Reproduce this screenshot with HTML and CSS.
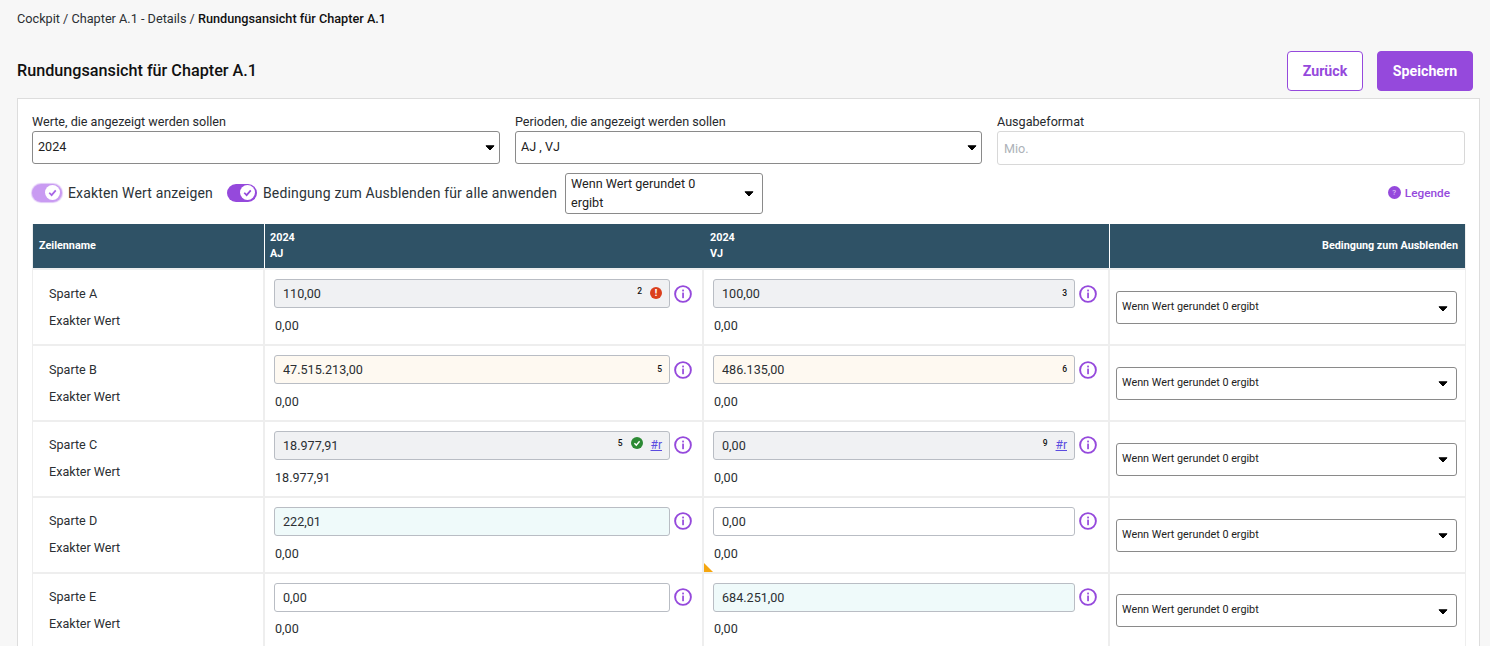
FILE: index.html
```html
<!DOCTYPE html>
<html lang="de">
<head>
  <meta charset="UTF-8" />
  <meta name="viewport" content="width=device-width, initial-scale=1.0"/>
  <title>Rundungsansicht für Chapter A.1</title>
  <link rel="stylesheet" href="styles.css">
</head>
<body>

  <svg class="defs" width="0" height="0">
    <symbol id="info" viewBox="0 0 18 18">
      <circle cx="9" cy="9" r="7.9" fill="none" stroke="currentColor" stroke-width="1.9"/>
      <rect x="8.2" y="7.6" width="1.7" height="5.6" fill="currentColor"/>
      <rect x="8.2" y="4.6" width="1.7" height="1.8" fill="currentColor"/>
    </symbol>
    <symbol id="caret" viewBox="0 0 10 6">
      <path d="M1 .8h8L5 5z" fill="#000" stroke="#000" stroke-width="1" stroke-linejoin="round"/>
    </symbol>
    <symbol id="check" viewBox="0 0 12 12">
      <path d="M3.4 6.2l1.9 1.9 3.3-3.8" fill="none" stroke="currentColor" stroke-width="1.4"/>
    </symbol>
  </svg>

  <div class="crumbs">Cockpit / Chapter A.1 - Details / <b>Rundungsansicht für Chapter A.1</b></div>

  <div class="page-head">
    <h1>Rundungsansicht für Chapter A.1</h1>
    <div class="actions">
      <button class="btn btn-outline">Zurück</button>
      <button class="btn btn-solid">Speichern</button>
    </div>
  </div>

  <div class="card">
    <div class="filters">
      <div class="filter">
        <label>Werte, die angezeigt werden sollen</label>
        <div class="select">2024<svg class="caret"><use href="#caret"/></svg></div>
      </div>
      <div class="filter">
        <label>Perioden, die angezeigt werden sollen</label>
        <div class="select">AJ , VJ<svg class="caret"><use href="#caret"/></svg></div>
      </div>
      <div class="filter">
        <label>Ausgabeformat</label>
        <div class="select select-off">Mio.</div>
      </div>
    </div>

    <div class="options">
      <span class="toggle toggle-light"><i><svg><use href="#check"/></svg></i></span>
      <span class="toggle-label">Exakten Wert anzeigen</span>
      <span class="toggle toggle-second"><i><svg><use href="#check"/></svg></i></span>
      <span class="toggle-label">Bedingung zum Ausblenden für alle anwenden</span>
      <div class="select select-wrap"><span>Wenn Wert gerundet 0 ergibt</span><svg class="caret"><use href="#caret"/></svg></div>
      <a class="legend"><span class="legend-icon">?</span>Legende</a>
    </div>

    <div class="table">
      <div class="row head">
        <div class="cell">Zeilenname</div>
        <div class="cell head-aj">2024<br>AJ</div>
        <div class="cell head-vj">2024<br>VJ</div>
        <div class="cell head-cond">Bedingung zum Ausblenden</div>
      </div>

      <div class="row">
        <div class="cell name"><span>Sparte A</span><span>Exakter Wert</span></div>
        <div class="cell value">
          <div class="line">
            <div class="amount grey">110,00<sup class="up">2</sup><span class="status err">!</span></div>
            <svg class="info"><use href="#info"/></svg>
          </div>
          <div class="exact">0,00</div>
        </div>
        <div class="cell value vj">
          <div class="line">
            <div class="amount grey">100,00<sup>3</sup></div>
            <svg class="info"><use href="#info"/></svg>
          </div>
          <div class="exact">0,00</div>
        </div>
        <div class="cell cond"><div class="select select-small">Wenn Wert gerundet 0 ergibt<svg class="caret"><use href="#caret"/></svg></div></div>
      </div>

      <div class="row">
        <div class="cell name"><span>Sparte B</span><span>Exakter Wert</span></div>
        <div class="cell value">
          <div class="line">
            <div class="amount cream">47.515.213,00<sup>5</sup></div>
            <svg class="info"><use href="#info"/></svg>
          </div>
          <div class="exact">0,00</div>
        </div>
        <div class="cell value vj">
          <div class="line">
            <div class="amount cream">486.135,00<sup>6</sup></div>
            <svg class="info"><use href="#info"/></svg>
          </div>
          <div class="exact">0,00</div>
        </div>
        <div class="cell cond"><div class="select select-small">Wenn Wert gerundet 0 ergibt<svg class="caret"><use href="#caret"/></svg></div></div>
      </div>

      <div class="row">
        <div class="cell name"><span>Sparte C</span><span>Exakter Wert</span></div>
        <div class="cell value">
          <div class="line">
            <div class="amount grey">18.977,91<sup class="up">5</sup><span class="status ok"><svg><use href="#check"/></svg></span><a class="ref">#r</a></div>
            <svg class="info"><use href="#info"/></svg>
          </div>
          <div class="exact">18.977,91</div>
        </div>
        <div class="cell value vj">
          <div class="line">
            <div class="amount grey">0,00<sup class="up">9</sup><a class="ref">#r</a></div>
            <svg class="info"><use href="#info"/></svg>
          </div>
          <div class="exact">0,00</div>
        </div>
        <div class="cell cond"><div class="select select-small">Wenn Wert gerundet 0 ergibt<svg class="caret"><use href="#caret"/></svg></div></div>
      </div>

      <div class="row">
        <div class="cell name"><span>Sparte D</span><span>Exakter Wert</span></div>
        <div class="cell value">
          <div class="line">
            <div class="amount mint">222,01</div>
            <svg class="info"><use href="#info"/></svg>
          </div>
          <div class="exact">0,00</div>
        </div>
        <div class="cell value vj">
          <div class="line">
            <div class="amount">0,00</div>
            <svg class="info"><use href="#info"/></svg>
          </div>
          <div class="exact">0,00</div>
          <span class="flag"></span>
        </div>
        <div class="cell cond"><div class="select select-small">Wenn Wert gerundet 0 ergibt<svg class="caret"><use href="#caret"/></svg></div></div>
      </div>

      <div class="row">
        <div class="cell name"><span>Sparte E</span><span>Exakter Wert</span></div>
        <div class="cell value">
          <div class="line">
            <div class="amount">0,00</div>
            <svg class="info"><use href="#info"/></svg>
          </div>
          <div class="exact">0,00</div>
        </div>
        <div class="cell value vj">
          <div class="line">
            <div class="amount mint">684.251,00</div>
            <svg class="info"><use href="#info"/></svg>
          </div>
          <div class="exact">0,00</div>
        </div>
        <div class="cell cond"><div class="select select-small">Wenn Wert gerundet 0 ergibt<svg class="caret"><use href="#caret"/></svg></div></div>
      </div>
    </div>
  </div>

</body>
</html>
```

FILE: styles.css
```css
html, body {
  height: 100%;
  overflow: hidden;
}

body {
  margin: 0;
  padding: 0 10px 0 17px;
  box-sizing: border-box;
  font-family: Roboto, "Liberation Sans", sans-serif;
  font-size: 12.6px;
  color: #212529;
  background: #f7f7f7;
}

.defs {
  position: absolute;
}

.crumbs {
  padding-top: 11px;
  height: 15px;
  line-height: 15px;
  font-size: 12.7px;
  color: #2b2f33;
}

.crumbs b {
  font-weight: 500;
  color: #111;
}

.page-head {
  display: flex;
  justify-content: space-between;
  align-items: center;
  margin-top: 25px;
  padding-right: 7px;
  height: 40px;
}

h1 {
  margin: 0 0 2px;
  font-size: 16.2px;
  font-weight: 500;
  color: #111;
}

.actions {
  display: flex;
  gap: 14px;
}

.btn {
  height: 40px;
  border-radius: 4px;
  font-family: inherit;
  font-size: 14.2px;
  font-weight: 700;
  border: 1px solid #9549dc;
}

.btn-outline {
  width: 76px;
  background: #fff;
  color: #9549dc;
}

.btn-solid {
  width: 96px;
  background: #9549dc;
  color: #fff;
}

.card {
  margin-top: 7px;
  height: 560px;
  padding: 14px 14px 0;
  background: #fff;
  border: 1px solid #ddd;
}

.filters {
  display: grid;
  grid-template-columns: 468px 467px 468px;
  gap: 15px;
}

.filter label {
  display: block;
  height: 18px;
  line-height: 18px;
  color: #26292d;
}

.select {
  position: relative;
  display: flex;
  align-items: center;
  height: 33px;
  padding: 0 22px 2px 5px;
  box-sizing: border-box;
  background: #fff;
  border: 1px solid #8a8a8a;
  border-radius: 3px;
  color: #222;
}

.select-off {
  height: 34px;
  padding: 0 22px 0 6px;
  border-color: #d8d8d8;
  color: #adb2b8;
}

.caret {
  position: absolute;
  right: 4px;
  top: 50%;
  width: 10px;
  height: 6px;
  margin-top: -3px;
}

.options {
  display: flex;
  align-items: center;
  height: 41px;
  margin-top: 8px;
}

.toggle {
  display: flex;
  justify-content: flex-end;
  align-items: center;
  width: 30px;
  height: 18px;
  margin-bottom: 2px;
  padding: 2px;
  box-sizing: border-box;
  border-radius: 9px;
  background: #9549dc;
  color: #9549dc;
}

.toggle i {
  display: block;
  width: 15px;
  height: 15px;
  border-radius: 50%;
  background: #fff;
}

.toggle svg {
  display: block;
  width: 15px;
  height: 15px;
}

.toggle-light {
  background: #c99bf2;
  color: #a865e6;
  box-shadow: 0 0 1px 1px #e0c8f7;
}

.toggle-second {
  margin-left: 14px;
}

.toggle-label {
  margin: 0 0 2px 6px;
  font-size: 14px;
  letter-spacing: .16px;
  color: #2c3338;
}

.select-wrap {
  width: 198px;
  height: 41px;
  margin-left: 8px;
  padding-right: 50px;
  line-height: 19px;
}

.select-wrap .caret {
  right: 8px;
}

.legend {
  display: flex;
  align-items: center;
  margin: 0 15px 2px auto;
  font-size: 11.8px;
  font-weight: 500;
  color: #9549dc;
}

.legend-icon {
  width: 13px;
  height: 13px;
  margin-right: 4px;
  border-radius: 50%;
  background: #9549dc;
  color: #d9bdf5;
  font-size: 8px;
  line-height: 13px;
  text-align: center;
}

.table {
  margin: 10px 0 0 1px;
  width: 1432px;
  background: #eee;
  box-shadow: -1px 0 #eee, 1px 0 #eee;
}

.row {
  display: grid;
  grid-template-columns: 230px 439px 406px 357px;
  height: 73.8px;
  margin-bottom: 2px;
}

.cell {
  border-left: 2px solid #eee;
  box-sizing: border-box;
  background: #fff;
}

.cell:first-child {
  border-left: 0;
}

.head {
  grid-template-columns: 231px 439px 406px 356px;
  height: 44px;
  margin-bottom: 2.4px;
  color: #fff;
  font-size: 10.8px;
  font-weight: 700;
}

.head .cell {
  display: flex;
  align-items: center;
  border-left: 0;
  padding-left: 6px;
  line-height: 16px;
  background: #2f5266;
}

.head .head-aj {
  padding-left: 5px;
  border-left: 1px solid #fff;
}

.head .head-vj {
  padding-left: 7px;
}

.head .head-cond {
  justify-content: flex-end;
  padding-right: 7px;
  border-left: 1px solid #fff;
}

.name {
  display: flex;
  flex-direction: column;
  gap: 12px;
  padding: 15.4px 0 0 16px;
  line-height: 15px;
  color: #2b2f33;
}

.value {
  position: relative;
  padding: 9px 0 0 9px;
}

.line {
  display: flex;
  align-items: center;
}

.amount {
  display: flex;
  align-items: center;
  width: 396px;
  height: 29px;
  padding: 0 7px 0 8px;
  box-sizing: border-box;
  background: #fff;
  border: 1px solid #b9bdc4;
  border-radius: 3px;
  color: #2b2f33;
}

.vj .amount {
  width: 362px;
}

.amount sup {
  align-self: flex-start;
  margin: 9px 0 0 auto;
  font-size: 8.5px;
  font-weight: 500;
  line-height: 8px;
  color: #111;
}

.amount sup.up {
  margin-top: 7px;
}

.grey {
  background: #f0f1f3;
}

.cream {
  background: #fef9f1;
}

.mint {
  background: #effafa;
}

.status {
  display: block;
  width: 12px;
  height: 12px;
  margin: 0 0 2px 8px;
  border-radius: 50%;
  color: #fff;
  font-size: 9px;
  font-weight: 900;
  line-height: 12px;
  text-align: center;
}

.status svg {
  display: block;
  width: 12px;
  height: 12px;
}

.err {
  background: #db3f1d;
}

.ok {
  margin-bottom: 4px;
  background: #2c8a34;
}

.ref {
  margin-left: 8px;
  color: #5b4be0;
  font-size: 12px;
  text-decoration: underline;
}

.info {
  width: 18px;
  height: 18px;
  margin-left: 4px;
  color: #9549dc;
}

.exact {
  margin: 9.8px 0 0 1px;
  line-height: 15px;
  color: #2b2f33;
}

.flag {
  position: absolute;
  left: 0;
  bottom: 0;
  width: 0;
  height: 0;
  border-bottom: 9px solid #f5a60f;
  border-right: 9px solid transparent;
}

.cond {
  padding: 20.8px 8px 0 6px;
}

.select-small {
  font-size: 10.8px;
  padding-bottom: 2px;
}

.select-small .caret {
  right: 8px;
  margin-top: -2px;
}
```
